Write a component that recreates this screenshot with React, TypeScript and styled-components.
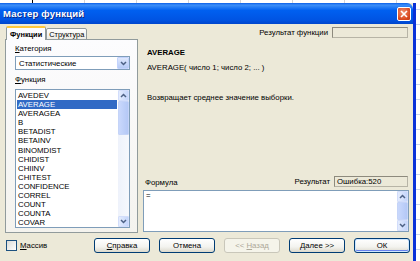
import React from "react";
import styled, { createGlobalStyle } from "styled-components";

const functions = [
  "AVEDEV",
  "AVERAGE",
  "AVERAGEA",
  "B",
  "BETADIST",
  "BETAINV",
  "BINOMDIST",
  "CHIDIST",
  "CHIINV",
  "CHITEST",
  "CONFIDENCE",
  "CORREL",
  "COUNT",
  "COUNTA",
  "COVAR",
];

const GlobalStyle = createGlobalStyle`
  body {
    margin: 0;
    font-family: "Liberation Sans", Arial, sans-serif;
    font-size: 7.8px;
    color: #000;
  }
`;

const Page = styled.div`
  width: 420px;
  height: 261px;
  overflow: hidden;
  background-color: #fff;
  background-image: linear-gradient(90deg, #000 1px, transparent 1px),
    linear-gradient(#c8d4f0 1px, transparent 1px),
    linear-gradient(90deg, #d4d4d4 1px, transparent 1px);
  background-size: 1px 4px, 100% 15px, 52px 100%;
  background-position: 32px 0, 0 9px, 32px 0;
  background-repeat: no-repeat, repeat, repeat;
  padding-top: 3px;
  box-sizing: border-box;
`;

const Window = styled.div`
  width: 416px;
  height: 258px;
  background: #ece9d8;
  border-right: 3px solid #0831d9;
  box-sizing: border-box;
  display: flex;
  flex-direction: column;
`;

const TitleBar = styled.div`
  height: 21px;
  flex: none;
  display: flex;
  align-items: center;
  justify-content: space-between;
  padding: 0 2px 0 3px;
  background: linear-gradient(
    #0a5fe8 0%,
    #3d8ff8 10%,
    #0060f0 35%,
    #0054e3 80%,
    #0046cc 100%
  );
  border-top-right-radius: 6px;
`;

const Title = styled.span`
  color: #fff;
  font-weight: bold;
  font-size: 9.5px;
  letter-spacing: 0.2px;
  text-shadow: 1px 1px 0 #0a2a8a;
`;

const CloseButton = styled.div`
  width: 12px;
  height: 12px;
  border: 1px solid #fff;
  border-radius: 2px;
  background: radial-gradient(circle at 40% 35%, #f09070, #d8471d 70%, #c13a14);
  display: flex;
  align-items: center;
  justify-content: center;
`;

const Body = styled.div`
  flex: 1;
  display: flex;
  flex-direction: column;
  padding: 2px 0 0 5px;
`;

const Main = styled.div`
  display: flex;
  gap: 2px;
  height: 206px;
`;

const LeftColumn = styled.div`
  width: 133px;
  display: flex;
  flex-direction: column;
`;

const TabRow = styled.div`
  display: flex;
  align-items: flex-end;
  height: 14px;
  padding-left: 1px;
  position: relative;
  z-index: 1;
`;

const Tab = styled.div<{ $active?: boolean }>`
  height: ${(p) => (p.$active ? 14 : 12)}px;
  padding: 0 ${(p) => (p.$active ? 3 : 2)}px;
  display: flex;
  align-items: center;
  background: ${(p) => (p.$active ? "#fcfcfe" : "linear-gradient(#fff, #ecebe5)")};
  border: 1px solid #919b9c;
  border-bottom: ${(p) => (p.$active ? "none" : "1px solid #919b9c")};
  border-top: ${(p) => (p.$active ? "2px solid #ffc83c" : "1px solid #919b9c")};
  border-radius: 2px 2px 0 0;
  font-weight: ${(p) => (p.$active ? "bold" : "normal")};
  font-size: 7.4px;
  box-sizing: border-box;
`;

const TabPanel = styled.div`
  flex: 1;
  margin-top: -1px;
  border: 1px solid #919b9c;
  background: linear-gradient(#fcfcfe, #f4f3ee);
  padding: 4px 7px 3px 9px;
  display: flex;
  flex-direction: column;
`;

const FieldLabel = styled.div`
  height: 10px;
  line-height: 10px;
  margin-bottom: 2px;
`;

const U = styled.span`
  text-decoration: underline;
`;

const Select = styled.div`
  height: 14px;
  border: 1px solid #7f9db9;
  background: #fff;
  display: flex;
  align-items: center;
  justify-content: space-between;
  padding-left: 3px;
  margin-bottom: 5px;
  box-sizing: border-box;
`;

const ArrowBox = styled.div`
  width: 12px;
  height: 12px;
  background: linear-gradient(#dfe8fd, #b6cbf7);
  border: 1px solid #c3d3fd;
  border-radius: 1px;
  display: flex;
  align-items: center;
  justify-content: center;
  box-sizing: border-box;
`;

const ListBox = styled.div`
  flex: 1;
  border: 1px solid #7f9db9;
  background: #fff;
  display: flex;
  margin: 2px 0 1px;
`;

const Items = styled.div`
  flex: 1;
  padding: 1px 1px 0 1px;
`;

const Item = styled.div<{ $selected?: boolean }>`
  height: 9.1px;
  line-height: 9.1px;
  padding-left: 1px;
  background: ${(p) => (p.$selected ? "#316ac5" : "transparent")};
  color: ${(p) => (p.$selected ? "#fff" : "#000")};
`;

const ScrollBar = styled.div`
  width: 11px;
  background: #f3f3ee;
  display: flex;
  flex-direction: column;
`;

const ScrollArrow = styled.div`
  height: 11px;
  flex: none;
  background: linear-gradient(90deg, #e4ecfd, #c4d5fb);
  border: 1px solid #d2ddfb;
  border-radius: 1px;
  display: flex;
  align-items: center;
  justify-content: center;
  box-sizing: border-box;
`;

const ScrollThumb = styled.div<{ $size: number }>`
  height: ${(p) => p.$size}px;
  flex: none;
  background: linear-gradient(90deg, #c9d8fc, #b4c8f6);
  border: 1px solid #c5d4f8;
  border-radius: 1px;
  box-sizing: border-box;
`;

const ScrollTrack = styled.div`
  flex: 1;
  background: linear-gradient(90deg, #eef2fb, #f6f8fd);
`;

const RightColumn = styled.div`
  flex: 1;
  display: flex;
  flex-direction: column;
  padding: 1px 4px 0 3px;
`;

const ResultRow = styled.div`
  display: flex;
  justify-content: flex-end;
  align-items: center;
  gap: 4px;
  height: 11px;
  padding-right: 1px;
`;

const ResultBox = styled.div<{ $width: number }>`
  width: ${(p) => p.$width}px;
  height: 11px;
  border: 1px solid #b7b4a6;
  border-left-color: #8d8a7d;
  border-top-color: #8d8a7d;
  background: #ece9d8;
  padding-left: 2px;
  line-height: 9px;
  box-sizing: border-box;
`;

const FuncName = styled.div`
  margin: 10px 0 0 4px;
  font-weight: bold;
  height: 10px;
  line-height: 10px;
`;

const Syntax = styled.div`
  margin: 5px 0 0 4px;
  height: 10px;
  line-height: 10px;
`;

const Description = styled.div`
  margin: 20px 0 0 4px;
  height: 10px;
  line-height: 10px;
`;

const FormulaHeader = styled.div`
  margin-top: auto;
  display: flex;
  align-items: flex-end;
  justify-content: space-between;
  padding: 0 1px 0 2px;
  height: 12px;
`;

const ResultGroup = styled.div`
  display: flex;
  align-items: center;
  gap: 4px;
`;

const FormulaArea = styled.div`
  margin-top: 3px;
  height: 40px;
  border: 1px solid #7f9db9;
  background: #fff;
  display: flex;
`;

const FormulaText = styled.div`
  flex: 1;
  padding: 0 2px;
  line-height: 10px;
`;

const Footer = styled.div`
  flex: 1;
  display: flex;
  align-items: center;
  padding-bottom: 3px;
`;

const CheckLabel = styled.label`
  display: flex;
  align-items: center;
  gap: 3px;
  width: 88px;
  margin-left: 1px;
`;

const CheckBox = styled.span`
  width: 9px;
  height: 9px;
  border: 1px solid #1c5180;
  background: linear-gradient(135deg, #dcdcd7, #fff);
`;

const Buttons = styled.div`
  display: flex;
  gap: 9px;
`;

const Button = styled.div<{ $disabled?: boolean; $default?: boolean }>`
  width: 56px;
  height: 15px;
  box-sizing: border-box;
  border: 1px solid ${(p) => (p.$disabled ? "#c9c7ba" : "#003c74")};
  border-radius: 3px;
  background: ${(p) =>
    p.$disabled ? "#f5f4ea" : "linear-gradient(#fff, #f3f3ef 60%, #dcd9cd)"};
  color: ${(p) => (p.$disabled ? "#aca899" : "#000")};
  box-shadow: ${(p) =>
    p.$default ? "inset 0 0 0 1px #cee7ff, inset 0 -1px 0 1px #6982ee" : "none"};
  display: flex;
  align-items: center;
  justify-content: center;
`;

const Chevron = ({ up }: { up?: boolean }) => (
  <svg width="7" height="5" viewBox="0 0 7 5">
    <path
      d={up ? "M1 4 L3.5 1.5 L6 4" : "M1 1 L3.5 3.5 L6 1"}
      fill="none"
      stroke="#4d6185"
      strokeWidth="1.5"
    />
  </svg>
);

const App = () => {
  return (
    <Page>
      <GlobalStyle />
      <Window>
        <TitleBar>
          <Title>Мастер функций</Title>
          <CloseButton>
            <svg width="8" height="8" viewBox="0 0 8 8">
              <path d="M1 1 L7 7 M7 1 L1 7" stroke="#fff" strokeWidth="1.6" />
            </svg>
          </CloseButton>
        </TitleBar>
        <Body>
          <Main>
            <LeftColumn>
              <TabRow>
                <Tab $active>Функции</Tab>
                <Tab>Структура</Tab>
              </TabRow>
              <TabPanel>
                <FieldLabel>
                  <U>К</U>атегория
                </FieldLabel>
                <Select>
                  Статистические
                  <ArrowBox>
                    <Chevron />
                  </ArrowBox>
                </Select>
                <FieldLabel>
                  <U>Ф</U>ункция
                </FieldLabel>
                <ListBox>
                  <Items>
                    {functions.map((name) => (
                      <Item key={name} $selected={name === "AVERAGE"}>
                        {name}
                      </Item>
                    ))}
                  </Items>
                  <ScrollBar>
                    <ScrollArrow>
                      <Chevron up />
                    </ScrollArrow>
                    <ScrollThumb $size={34} />
                    <ScrollTrack />
                    <ScrollArrow>
                      <Chevron />
                    </ScrollArrow>
                  </ScrollBar>
                </ListBox>
              </TabPanel>
            </LeftColumn>
            <RightColumn>
              <ResultRow>
                Результат функции
                <ResultBox $width={76} />
              </ResultRow>
              <FuncName>AVERAGE</FuncName>
              <Syntax>AVERAGE( число 1; число 2; ... )</Syntax>
              <Description>Возвращает среднее значение выборки.</Description>
              <FormulaHeader>
                <span>Формула</span>
                <ResultGroup>
                  Результат
                  <ResultBox $width={74}>Ошибка:520</ResultBox>
                </ResultGroup>
              </FormulaHeader>
              <FormulaArea>
                <FormulaText>=</FormulaText>
                <ScrollBar>
                  <ScrollArrow>
                    <Chevron up />
                  </ScrollArrow>
                  <ScrollThumb $size={18} />
                  <ScrollArrow>
                    <Chevron />
                  </ScrollArrow>
                </ScrollBar>
              </FormulaArea>
            </RightColumn>
          </Main>
          <Footer>
            <CheckLabel>
              <CheckBox />
              <span>
                <U>М</U>ассив
              </span>
            </CheckLabel>
            <Buttons>
              <Button>
                <span>
                  <U>С</U>правка
                </span>
              </Button>
              <Button>Отмена</Button>
              <Button $disabled>
                <span>
                  &lt;&lt; <U>Н</U>азад
                </span>
              </Button>
              <Button>
                <span>
                  <U>Д</U>алее &gt;&gt;
                </span>
              </Button>
              <Button $default>ОК</Button>
            </Buttons>
          </Footer>
        </Body>
      </Window>
    </Page>
  );
};

export default App;
